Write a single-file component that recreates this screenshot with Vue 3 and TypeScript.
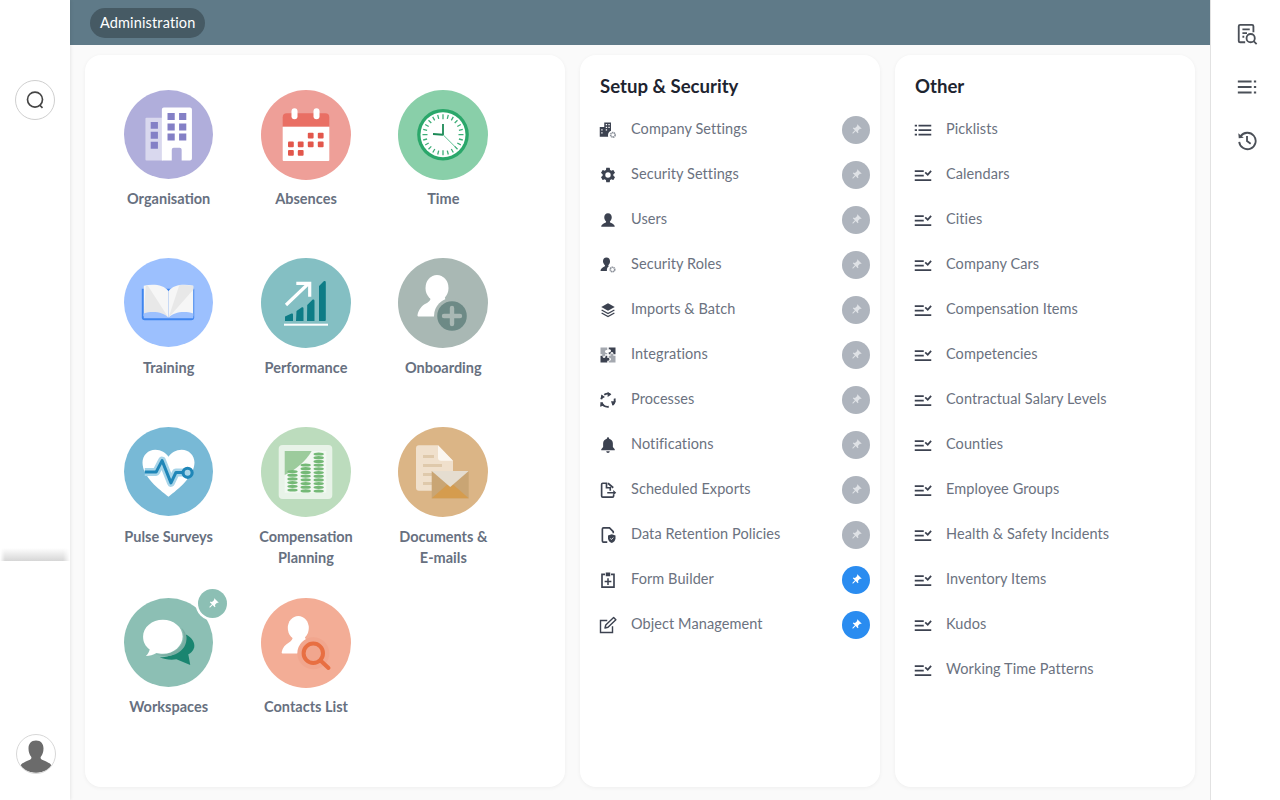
<script setup lang="ts">
interface Tile { name: string; color: string; art: string; pinned?: boolean }
interface Row { name: string; icon: string; pinned?: boolean }

const clockTicks = Array.from({ length: 24 }, (_, i) => {
  const a = (i * Math.PI) / 12
  const r1 = i % 6 === 0 ? 15.500 : 16.500
  const r2 = 20.500
  const p = (r: number) => `${(45 + r * Math.sin(a)).toFixed(1)} ${(44.7 - r * Math.cos(a)).toFixed(1)}`
  return `M${p(r1)}L${p(r2)}`
}).join('')

const coinStack = (x: number, top: number, n: number) =>
  Array.from({ length: n }, (_, i) =>
    `<ellipse cx="${x}" cy="${top + i * 3.7}" rx="5.200" ry="1.600" fill="#74b976"/>`).join('')

const tiles: Tile[] = [
  {
    name: 'Organisation', color: '#b0aedb',
    art: `<rect x="21.7" y="28" width="18" height="43.3" rx="1" fill="#d9d8ee"/>
      <path d="M27 32.3h7.3v7H27zM27 42.3h7.3v7H27zM27 52.3h7.3v7H27z" fill="#8480c6"/>
      <path d="M40 17.7h26.7a2 2 0 0 1 2 2v49.6a2 2 0 0 1-2 2h-8.4v-11a2 2 0 0 0-2-2h-6a2 2 0 0 0-2 2v11h-10V19.700a2 2 0 0 1 2-2z" fill="#fff"/>
      <path d="M44 23.3h7.300v7H44zM55.700 23.300H63v7h-7.300zM44 34h7.300v7H44zM55.700 34H63v7h-7.300zM44 44h7.300v7H44zM55.700 44H63v7h-7.300z" fill="#8480c6"/>`,
  },
  {
    name: 'Absences', color: '#ee9f98',
    art: `<path d="M21.700 36.700v-9.400a4 4 0 0 1 4-4h38.600a4 4 0 0 1 4 4v9.400z" fill="#e96f64"/>
      <path d="M21.700 36.700h46.600V70a1 1 0 0 1-1 1H22.700a1 1 0 0 1-1-1z" fill="#fff"/>
      <rect x="30.500" y="18.300" width="6" height="11" rx="3" fill="#fff"/><rect x="52.500" y="18.300" width="6" height="11" rx="3" fill="#fff"/>
      <g fill="#e2574c"><rect x="46.800" y="42.700" width="5.800" height="5.800" rx="1"/><rect x="56.800" y="42.700" width="5.800" height="5.800" rx="1"/>
      <rect x="27" y="51.400" width="5.800" height="5.800" rx="1"/><rect x="36.800" y="51.400" width="5.800" height="5.800" rx="1"/><rect x="46.800" y="51.400" width="5.800" height="5.800" rx="1"/><rect x="56.800" y="51.400" width="5.800" height="5.800" rx="1"/>
      <rect x="27" y="60" width="5.800" height="5.800" rx="1"/><rect x="36.800" y="60" width="5.800" height="5.800" rx="1"/></g>`,
  },
  {
    name: 'Time', color: '#89cfa9',
    art: `<circle cx="45" cy="44.700" r="25.800" fill="#2aa76a"/><circle cx="45" cy="44.700" r="22.500" fill="#fff"/>
      <path d="${clockTicks}" stroke="#3eae78" stroke-width="1.300" fill="none"/>
      <path d="M45 34v11" stroke="#1b8a56" stroke-width="1.800"/><path d="M35 44l10 .7" stroke="#1b8a56" stroke-width="2"/><path d="M45 44.700l14 14" stroke="#4cb886" stroke-width="0.900"/>`,
  },
  {
    name: 'Training', color: '#9cc0fe',
    art: `<path d="M18 31h53v29a3 3 0 0 1-3 3H21a3 3 0 0 1-3-3z" fill="#3f85ee"/>
      <path d="M20 28c10-2 20-1 25 5.500v27C40 57 28 56 20 59z" fill="#f6f6f6"/>
      <path d="M70 28c-10-2-20-1-25 5.500v27c5-3.500 17-4.500 25-1.500z" fill="#f6f6f6"/>
      <path d="M22 27.800c1 0 1.400-.1 2-.1L45 60.500C40 57 28 56 20 59z" fill="#e8e8e8"/>
      <path d="M45 60.500l11-33.200c4.800-.3 9.700 0 14 .7v4z" fill="#e8e8e8"/>
      <path d="M20 61V56c9-3 20-1.500 25 4.500 5-6 16-7.500 25-4.500v5z" fill="#9cc0fe"/>`,
  },
  {
    name: 'Performance', color: '#84bfc3',
    art: `<path d="M24 58.500l6.500-3c1-.3 1.500.3 1.500 1v6.500h-8zM35.500 53l5-3.500c1-.6 2-.2 2 1V63h-7.500zM46.200 47l5-5c1-.8 2.300-.4 2.300 1V63h-7.500zM58 28l4.500-4.500c1-.8 2.300-.4 2.300 1V62a1 1 0 0 1-1 1H58z" fill="#0e7c86"/>
      <rect x="23" y="65.700" width="44" height="2" fill="#fff"/>
      <path d="M25 47l22-21M35.300 25.300h13.400v13.400" stroke="#fff" stroke-width="3.200" fill="none"/>`,
  },
  {
    name: 'Onboarding', color: '#a9b8b4',
    art: `<ellipse cx="39" cy="30" rx="11.500" ry="13" fill="#fff"/>
      <path d="M33 38c0 4-2 6-5 7.500-4 2-7.500 6-8.500 11.500-.2 1 .5 1.500 1.500 1.500h34L46 38z" fill="#fff"/>
      <circle cx="54" cy="58" r="18" fill="#a9b8b4"/><circle cx="54" cy="58" r="14.800" fill="#6d8a86"/>
      <path d="M54 50v16M46 58h16" stroke="#a9b8b4" stroke-width="4.400" stroke-linecap="round"/>`,
  },
  {
    name: 'Pulse Surveys', color: '#78b9d6',
    art: `<path d="M45 70.500C35 63 18.700 50 18.700 36c0-7.500 5.800-13 13-13 5.800 0 10.500 3 13.300 7 2.800-4 7.500-7 13.300-7 7.200 0 13 5.500 13 13C71 50 55 63 45 70.500z" fill="#fff"/>
      <path d="M21 45.500h11.500l6-11.500 9 22.500 5-10.500h8" stroke="#a7d4e8" stroke-width="8" fill="none" stroke-linejoin="round"/>
      <path d="M21 45.500h11.500l6-11.500 9 22.500 5-10.500h8" stroke="#1f86b8" stroke-width="3" fill="none" stroke-linejoin="round"/>
      <circle cx="64.300" cy="46.300" r="4.600" fill="#a7d4e8" stroke="#1f86b8" stroke-width="3.200"/>`,
  },
  {
    name: 'Compensation Planning', color: '#bcdcbd',
    art: `<rect x="17.700" y="18" width="53.600" height="54" rx="4" fill="#e8f3e8"/>
      <rect x="23.700" y="24" width="41.600" height="41.700" fill="#f2f8f2"/>
      <path d="M23.700 24h27c-6 10-15 18-27 24z" fill="#9ccb9c"/>
      ${coinStack(31.500, 44.500, 6)}${coinStack(44.700, 38, 8)}${coinStack(57.700, 27, 11)}`,
  },
  {
    name: 'Documents & E-mails', color: '#dbb586',
    art: `<path d="M21 18.300h19l15 15.500v27a3 3 0 0 1-3 3H21a3 3 0 0 1-3-3v-39.500a3 3 0 0 1 3-3z" fill="#f0e0cc"/>
      <path d="M40 18.300l15 15.500H43a3 3 0 0 1-3-3z" fill="#fbf6ef"/>
      <path d="M25 28h11v3H25zM25 37h19v3H25zM25 46h12v3H25zM25 55h10v3H25z" fill="#dfc9ab"/>
      <rect x="33.700" y="44" width="37" height="27.300" fill="#c9a574"/>
      <path d="M33.700 71.300L52.200 55l18.500 16.300z" fill="#d59c4e"/>
      <path d="M33.700 44h37L52.200 60z" fill="#e5ddd0"/>`,
  },
  {
    name: 'Workspaces', color: '#8cbfb4', pinned: true,
    art: `<path d="M62.700 37C69 40 72 46 71 50c-1 4-4 6-6 7l2 10.700L53 62c-6 1-12 0-17-2 14 0 29-8 26.700-23z" fill="#1a8570"/>
      <path d="M58 30c5 9 2 18-6 23-6 3.500-13 5-20 4 5 2 13 3 20 0 8-4 12-10 11-18-.5-4-2.500-7-5-9z" fill="#7aaea3"/>
      <path d="M39.300 22c11 0 20 7.500 20 17s-9 17.500-20 17.500c-2.500 0-4.500-.2-6.500-.8-3 2-7 3-10.800 3 2-1.700 3.500-4.200 4-6.700C21.500 49 19.300 44.500 19.300 39c0-9.500 9-17 20-17z" fill="#fff"/>`,
  },
  {
    name: 'Contacts List', color: '#f3ad96',
    art: `<ellipse cx="37.300" cy="30" rx="10.500" ry="12" fill="#fff"/>
      <path d="M32 38c0 3-1.500 5-4 6.500-3.500 2-6.500 5-7.300 9.500-.2 1 .5 1.500 1.500 1.500H50L43.500 38z" fill="#fff"/>
      <circle cx="52.300" cy="55.300" r="16" fill="#f1a68e"/>
      <circle cx="52.300" cy="55.300" r="9.700" fill="none" stroke="#e86f42" stroke-width="4"/>
      <path d="M59.500 62.500l8 7.500" stroke="#e86f42" stroke-width="4" stroke-linecap="round"/>`,
  },
]

const settingsGear = 'M19.140 12.940c.04-.3.060-.61.060-.94s-.02-.64-.070-.94l2.030-1.580a.49.49 0 0 0 .12-.61l-1.920-3.320a.49.49 0 0 0-.59-.22l-2.390.96c-.5-.38-1.030-.7-1.620-.94l-.36-2.540a.48.480 0 0 0-.48-.41h-3.840c-.24 0-.43.17-.47.41l-.36 2.540c-.59.24-1.130.57-1.620.94l-2.390-.96a.48.48 0 0 0-.59.22L2.740 8.870c-.12.21-.08.47.120.61l2.030 1.580c-.05.3-.09.63-.09.94s.02.640.070.940l-2.030 1.580a.49.49 0 0 0-.12.61l1.920 3.320c.12.22.37.29.59.22l2.390-.96c.5.380 1.030.7 1.620.94l.36 2.540c.05.240.24.410.48.410h3.840c.24 0 .44-.170.47-.410l.36-2.540c.59-.24 1.130-.56 1.620-.94l2.390.96c.22.080.47 0 .59-.22l1.920-3.320a.49.49 0 0 0-.12-.61zM12 15.600a3.600 3.600 0 1 1 0-7.200 3.600 3.600 0 0 1 0 7.200z'
const smallGear = (x: number, y: number) =>
  `<circle cx="${x}" cy="${y}" r="3" fill="none" stroke="#8e939c" stroke-width="2.200" stroke-dasharray="1.800 .5"/>`

const setupRows: Row[] = [
  {
    name: 'Company Settings',
    icon: `<path d="M1 8h6V2h9v11c-2.500 1-4 3-4 6 0 1 .1 1.500.3 2H1z" fill="#3c4250"/>
      <path d="M9 4h1.800v1.800H9zM12.500 4h1.800v1.800h-1.800zM9 7.500h1.800v1.800H9zM12.500 7.500h1.800v1.800h-1.800zM3 11h1.800v1.800H3zM3 15h1.800v1.800H3zM9 11h1.800v1.800H9z" fill="#fff"/>
      ${smallGear(18.500, 18.500)}`,
  },
  { name: 'Security Settings', icon: `<path d="${settingsGear}" fill="#3c4250"/>` },
  {
    name: 'Users',
    icon: '<path d="M12 3c3.200 0 5 2.400 5 5.300 0 2.400-1 4.200-2.200 5.500-.5.600-.2 1.500.5 1.800 2.500 1 5.700 2.100 5.700 5.400H3c0-3.300 3.200-4.400 5.700-5.400.7-.3 1-1.200.5-1.800C8 12.500 7 10.700 7 8.300 7 5.400 8.800 3 12 3z" fill="#3c4250"/>',
  },
  {
    name: 'Security Roles',
    icon: `<path d="M10 2c3 0 4.700 2.200 4.700 5 0 2.200-.9 3.900-2 5.100-.5.600-.2 1.400.4 1.700-1.600 1.100-2.600 3-2.600 5 0 .5 0 .8.100 1.200H2c0-3 2.800-4.800 5.300-5.900.7-.3 1-1.200.5-1.800C6.800 11 5.300 9.300 5.300 7 5.300 4.200 7 2 10 2z" fill="#3c4250"/>
      ${smallGear(18, 18)}`,
  },
  {
    name: 'Imports & Batch',
    icon: `<path d="M12 3l9 5-9 5-9-5z" fill="#3c4250"/>
      <path d="M3.500 12l8.500 4.700 8.500-4.700M3.500 16l8.500 4.700 8.500-4.700" fill="none" stroke="#3c4250" stroke-width="1.800"/>`,
  },
  {
    name: 'Integrations',
    icon: `<path d="M2 2h9v3.500a2 2 0 1 0 0 3.500v2H8a2 2 0 1 1-3.500 0H2z" fill="#a4a8af"/>
      <path d="M13 2h9v9h-3a2 2 0 1 0-3.500 0H13V8a2 2 0 1 0 0-3.500z" fill="#3c4250"/>
      <path d="M2 13h3a2 2 0 1 0 3.500 0H11v3a2 2 0 1 1 0 3.500V22H2z" fill="#3c4250"/>
      <path d="M13 13h2.500a2 2 0 1 1 3.500 0h3v9h-9v-2.500a2 2 0 1 0 0-3.500z" fill="#a4a8af"/>`,
  },
  {
    name: 'Processes',
    icon: `<g fill="none" stroke="#3c4250" stroke-width="2.400"><path d="M7 5a9 9 0 0 1 8-1"/><path d="M20.800 10a9 9 0 0 1-2.500 8.500"/><path d="M13 21a9 9 0 0 1-9.500-6"/><path d="M3 11a9 9 0 0 1 2-4.500"/></g>
      <path d="M11.500 1l5 3.500-5 3.500zM22.500 13.500l-4.500 6-2-6zM7.500 19l-6 2 .5-6.500zM2.500 11l.5-6.500 5 3.500z" fill="#3c4250"/>`,
  },
  {
    name: 'Notifications',
    icon: '<path d="M12 22.500c1.300 0 2.300-1 2.300-2.200H9.700c0 1.200 1 2.200 2.300 2.200zm9-5l-2.500-2.800V10c0-3-1.800-5.500-5-6.200V3a1.500 1.500 0 0 0-3 0v.8c-3.200.7-5 3.200-5 6.200v4.700L3 17.500v1.500h18z" fill="#3c4250"/>',
  },
  {
    name: 'Scheduled Exports',
    icon: '<path d="M15 13V9h-5V3H5a1.500 1.500 0 0 0-1.500 1.500v15.500A1.500 1.500 0 0 0 5 21.500h13a1.500 1.500 0 0 0 1.500-1.500v-2M12 3l7 6" fill="none" stroke="#3c4250" stroke-width="2.200"/><path d="M11 14.500h8V12l4 3.500-4 3.500v-2.500h-8z" fill="#3c4250"/>',
  },
  {
    name: 'Data Retention Policies',
    icon: '<path d="M11 21.500H6a1.500 1.500 0 0 1-1.500-1.500V4A1.500 1.500 0 0 1 6 2.500h8l5 5v2" fill="none" stroke="#3c4250" stroke-width="2.200"/><path d="M17 11l5 1.800v3.500c0 3-2.200 5.500-5 6.500-2.800-1-5-3.500-5-6.500v-3.500z" fill="#3c4250"/><path d="M15 16.500l1.500 1.500 2.500-2.500" stroke="#fff" stroke-width="1.200" fill="none"/>',
  },
  {
    name: 'Form Builder',
    icon: '<path d="M8 4.500H4v17h16v-17h-4" fill="none" stroke="#3c4250" stroke-width="2.200"/><path d="M9 2h6v5H9zM11 9.500h2v3.500h3.500v2H13v3.500h-2V15H7.500v-2H11z" fill="#3c4250"/>',
  },
  {
    name: 'Object Management',
    icon: '<path d="M18 13.500V22H2V6h9" fill="none" stroke="#3c4250" stroke-width="1.900"/><path d="M8 16l1-4L19.500 2 22.500 5 12 15z" fill="none" stroke="#3c4250" stroke-width="1.900" stroke-linejoin="round"/>',
  },
].map(r => ({ ...r, pinned: r.name === 'Form Builder' || r.name === 'Object Management' }))

const checkList = '<path d="M1 5.500h12v2.400H1zM1 11.500h12v2.400H1zM1 17.500h22v2.400H1z" fill="#3c4250"/><path d="M15 8.500l3.300 3.200L22.800 6.500" fill="none" stroke="#3c4250" stroke-width="2.400"/>'

const otherRows: Row[] = [
  {
    name: 'Picklists',
    icon: '<path d="M6 5h17v2.400H6zM6 11h17v2.400H6zM6 17h17v2.400H6zM1 5h3v2.400H1zM1 11h3v2.400H1zM1 17h3v2.400H1z" fill="#3c4250"/>',
  },
  ...['Calendars', 'Cities', 'Company Cars', 'Compensation Items', 'Competencies',
    'Contractual Salary Levels', 'Counties', 'Employee Groups', 'Health & Safety Incidents',
    'Inventory Items', 'Kudos', 'Working Time Patterns'].map(name => ({ name, icon: checkList })),
]

const pinPath = 'M16 9V4h1c.55 0 1-.45 1-1s-.45-1-1-1H7c-.55 0-1 .45-1 1s.45 1 1 1h1v5c0 1.660-1.340 3-3 3v2h5.970v7l1 1 1-1v-7H19v-2c-1.660 0-3-1.340-3-3z'
</script>

<template>
  <div class="app">
    <aside class="side">
      <button class="side__search">
        <svg width="20" height="20" viewBox="0 0 24 24" fill="none" stroke="#444" stroke-width="2">
          <circle cx="12" cy="11.500" r="9" />
          <path d="M17.500 18l3.500 3.500" />
        </svg>
      </button>
      <div class="side__bottom">
        <div class="avatar">
          <svg width="40" height="40" viewBox="0 0 40 40">
            <path d="M20 6.500c5 0 7.500 3.500 7.500 8 0 3.500-1 6-2.500 8-.8 1.200-.4 2.500 1 3.200 3 1.400 8.500 3 10 6.500-3.500 4-9.500 6.500-16 6.500S7.500 36.200 4 32.200c1.500-3.500 7-5.100 10-6.500 1.400-.7 1.800-2 1-3.200-1.500-2-2.500-4.500-2.500-8 0-4.500 2.500-8 7.500-8z" fill="#6b6b6b" />
          </svg>
        </div>
      </div>
    </aside>

    <main class="main">
      <header class="topbar">
        <span class="topbar__pill">Administration</span>
      </header>
      <div class="board">
        <section class="card card--tiles">
          <div class="tiles">
            <div v-for="tile in tiles" :key="tile.name" class="tile">
              <div class="tile__wrap">
                <svg class="tile__art" viewBox="0 0 90 90">
                  <circle cx="45" cy="45" r="45" :fill="tile.color" />
                  <g v-html="tile.art" />
                </svg>
                <span v-if="tile.pinned" class="tile__pin" :style="{ background: tile.color }">
                  <svg width="12" height="12" viewBox="0 0 24 24" fill="#fff">
                    <path :d="pinPath" transform="rotate(45 12 12)" />
                  </svg>
                </span>
              </div>
              <div class="tile__label">{{ tile.name }}</div>
            </div>
          </div>
        </section>

        <section class="card card--list">
          <h2 class="card__title">Setup &amp; Security</h2>
          <div v-for="row in setupRows" :key="row.name" class="row">
            <svg class="row__icon" width="18" height="18" viewBox="0 0 24 24" v-html="row.icon" />
            <span class="row__name">{{ row.name }}</span>
            <span class="pin" :class="{ 'pin--on': row.pinned }">
              <svg width="12" height="12" viewBox="0 0 24 24">
                <path :d="pinPath" transform="rotate(45 12 12)" />
              </svg>
            </span>
          </div>
        </section>

        <section class="card card--list">
          <h2 class="card__title">Other</h2>
          <div v-for="row in otherRows" :key="row.name" class="row">
            <svg class="row__icon" width="18" height="18" viewBox="0 0 24 24" v-html="row.icon" />
            <span class="row__name">{{ row.name }}</span>
          </div>
        </section>
      </div>
    </main>

    <aside class="rail">
      <svg width="22" height="22" viewBox="0 0 24 24" fill="none" stroke="#4b5058" stroke-width="2">
        <path d="M10 21H4.500A1.500 1.500 0 0 1 3 19.500v-16A1.500 1.500 0 0 1 4.500 2h13A1.500 1.500 0 0 1 19 3.500V10" />
        <path d="M7 7h8M7 11h5M7 15h2" />
        <circle cx="16" cy="16.500" r="4.500" />
        <path d="M19.500 20l3 3" />
      </svg>
      <svg width="22" height="22" viewBox="0 0 24 24" fill="#4b5058">
        <path d="M2 5h15v2H2zM2 11h15v2H2zM2 17h15v2H2zM19.500 5H22v2h-2.500zM19.500 11H22v2h-2.500zM19.500 17H22v2h-2.500z" />
      </svg>
      <svg width="22" height="22" viewBox="0 0 24 24" fill="none" stroke="#4b5058" stroke-width="2">
        <path d="M5 8a9 9 0 1 1-1.500 6" />
        <path d="M12 7.500V13l4 3" />
        <path d="M2.500 4.500L3 10l5.500-.5z" fill="#4b5058" stroke="none" />
      </svg>
    </aside>
  </div>
</template>

<style>
html, body {
  margin: 0;
  background: #fafafa;
}
</style>

<style scoped>
.app {
  display: flex;
  height: 800px;
  overflow: hidden;
  font-family: Lato, "Noto Sans", sans-serif;
  color: #6b7280;
}

.side {
  width: 70px;
  flex: none;
  display: flex;
  flex-direction: column;
  align-items: center;
  background: #fff;
  box-shadow: 1px 0 3px rgba(0, 0, 0, 0.08);
  z-index: 2;
}

.side__search {
  width: 40px;
  height: 40px;
  margin-top: 80px;
  padding: 0;
  display: flex;
  align-items: center;
  justify-content: center;
  background: #fff;
  border: 1px solid #cfcfcf;
  border-radius: 50%;
}

.side__bottom {
  position: relative;
  margin-top: auto;
  align-self: stretch;
  height: 239px;
  background: #fff;
  display: flex;
  justify-content: center;
}

/* soft band sitting on top of the lower sidebar block */
.side__bottom::before {
  content: "";
  position: absolute;
  left: 0;
  right: 0;
  top: -13px;
  height: 13px;
  background: linear-gradient(to top, #d6d6d6, #ececec 55%, #fff);
  -webkit-mask-image: linear-gradient(to right, transparent, #000 5px, #000 calc(100% - 7px), transparent);
  mask-image: linear-gradient(to right, transparent, #000 5px, #000 calc(100% - 7px), transparent);
}

.avatar {
  width: 40px;
  height: 40px;
  margin-top: 173px;
  margin-left: 2px;
  border: 1px solid #d8d8d8;
  border-radius: 50%;
  overflow: hidden;
  box-sizing: border-box;
}

.avatar svg {
  display: block;
  margin: -1px;
}

.main {
  flex: 1;
  min-width: 0;
  display: flex;
  flex-direction: column;
  background: #fafafa;
}

.topbar {
  height: 45px;
  flex: none;
  display: flex;
  align-items: flex-start;
  padding: 8px 20px 0;
  box-sizing: border-box;
  background: #5f7a88;
}

.topbar__pill {
  height: 30px;
  padding: 0 10px;
  line-height: 29px;
  border-radius: 15px;
  background: #465a64;
  color: #fff;
  font-size: 14.5px;
  letter-spacing: 0.14px;
}

.board {
  flex: 1;
  display: flex;
  gap: 15px;
  padding: 10px 15px 13px;
  min-height: 0;
}

.card {
  background: #fff;
  border-radius: 16px;
  box-shadow: 0 1px 4px rgba(0, 0, 0, 0.05);
}

.card--tiles {
  width: 480px;
  flex: none;
  box-sizing: border-box;
  padding: 35px 15px 0;
}

.tiles {
  display: grid;
  grid-template-columns: repeat(3, 137.33px);
  grid-template-rows: 168px 169px 171px;
}

.tile {
  display: flex;
  flex-direction: column;
  align-items: center;
}

.tile__wrap {
  position: relative;
  width: 90px;
  height: 90px;
}

/* first column circles come out a pixel smaller in the reference */
.tile:nth-child(3n + 1) .tile__wrap {
  width: 89px;
  height: 89px;
  margin-bottom: 1px;
}

.tile__art {
  display: block;
  width: 100%;
  height: 100%;
}

.tile__pin {
  position: absolute;
  top: -9px;
  right: -14px;
  width: 29px;
  height: 29px;
  display: flex;
  align-items: center;
  justify-content: center;
  border-radius: 50%;
  box-shadow: 0 0 0 2.500px #fff;
}

.tile__label {
  margin-top: 8px;
  text-align: center;
  width: 100px;
  font-size: 14.500px;
  line-height: 21px;
  font-weight: 700;
  color: #677080;
}

/* middle two rows sit a pixel lower under their circles */
.tile:nth-child(n + 4):nth-child(-n + 9) .tile__label {
  margin-top: 9px;
}

.card--list {
  width: 300px;
  flex: none;
  box-sizing: border-box;
  padding: 20px 10px 0 20px;
}

.card__title {
  margin: 0 0 10px;
  font-size: 18.600px;
  line-height: 22px;
  font-weight: 700;
  color: #1e2430;
}

.row {
  height: 45px;
  display: flex;
  align-items: center;
}

.row__icon {
  flex: none;
  margin-left: -1px;
  margin-right: 14px;
}

.row__name {
  flex: 1;
  font-size: 14.500px;
  letter-spacing: 0.08px;
  color: #6b7280;
  margin-top: -3px;
}

.pin {
  flex: none;
  width: 28px;
  height: 28px;
  display: flex;
  align-items: center;
  justify-content: center;
  border-radius: 50%;
  background: #aeb4bd;
  fill: #dfe2e6;
}

.pin--on {
  background: #2a8cf0;
  fill: #fff;
}

.rail {
  width: 70px;
  flex: none;
  display: flex;
  flex-direction: column;
  align-items: center;
  gap: 31px;
  padding: 23px 0 0 3px;
  box-sizing: border-box;
  background: #fff;
  border-left: 1px solid #e2e2e2;
}
</style>
